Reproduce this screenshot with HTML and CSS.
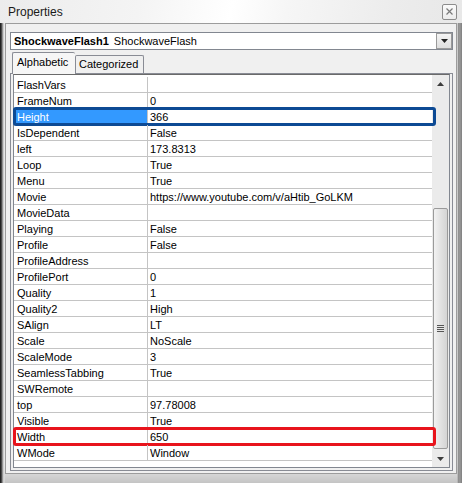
FILE: index.html
```html
<!DOCTYPE html>
<html lang="en">
<head>
    <meta charset="UTF-8">
    <title>Properties</title>
    <link rel="stylesheet" href="styles.css">
</head>
<body>
    <!-- Tool window title -->
    <div class="titlebar">
        <span class="title">Properties</span>
        <div class="close">
            <svg width="7" height="7" viewBox="0 0 7 7">
                <path d="M0.5 0.5 L6.5 6.5 M6.5 0.5 L0.5 6.5" stroke="#7a7a7a" stroke-width="1.2" fill="none"/>
            </svg>
        </div>
    </div>

    <div class="frame">
        <div class="panel">
            <!-- Object picker -->
            <div class="combo">
                <span><b>ShockwaveFlash1</b> ShockwaveFlash</span>
                <div class="drop">
                    <svg width="7" height="4" viewBox="0 0 7 4"><path d="M0 0 H7 L3.5 4 Z" fill="#222"/></svg>
                </div>
            </div>

            <div class="tabs">
                <div class="tab active">Alphabetic</div>
                <div class="tab">Categorized</div>
            </div>

            <div class="page">
                <div class="grid">
                    <div class="rows">
                        <div class="row"><div class="name">FlashVars</div><div class="val"></div></div>
                        <div class="row"><div class="name">FrameNum</div><div class="val">0</div></div>
                        <div class="row sel mark-blue"><div class="name">Height</div><div class="val">366</div></div>
                        <div class="row"><div class="name">IsDependent</div><div class="val">False</div></div>
                        <div class="row"><div class="name">left</div><div class="val">173.8313</div></div>
                        <div class="row"><div class="name">Loop</div><div class="val">True</div></div>
                        <div class="row"><div class="name">Menu</div><div class="val">True</div></div>
                        <div class="row"><div class="name">Movie</div><div class="val">https://www.youtube.com/v/aHtib_GoLKM</div></div>
                        <div class="row"><div class="name">MovieData</div><div class="val"></div></div>
                        <div class="row"><div class="name">Playing</div><div class="val">False</div></div>
                        <div class="row"><div class="name">Profile</div><div class="val">False</div></div>
                        <div class="row"><div class="name">ProfileAddress</div><div class="val"></div></div>
                        <div class="row"><div class="name">ProfilePort</div><div class="val">0</div></div>
                        <div class="row"><div class="name">Quality</div><div class="val">1</div></div>
                        <div class="row"><div class="name">Quality2</div><div class="val">High</div></div>
                        <div class="row"><div class="name">SAlign</div><div class="val">LT</div></div>
                        <div class="row"><div class="name">Scale</div><div class="val">NoScale</div></div>
                        <div class="row"><div class="name">ScaleMode</div><div class="val">3</div></div>
                        <div class="row"><div class="name">SeamlessTabbing</div><div class="val">True</div></div>
                        <div class="row"><div class="name">SWRemote</div><div class="val"></div></div>
                        <div class="row"><div class="name">top</div><div class="val">97.78008</div></div>
                        <div class="row"><div class="name">Visible</div><div class="val">True</div></div>
                        <div class="row mark-red"><div class="name">Width</div><div class="val">650</div></div>
                        <div class="row"><div class="name">WMode</div><div class="val">Window</div></div>
                    </div>

                    <!-- Vertical scrollbar -->
                    <div class="scroll">
                        <div class="arrow">
                            <svg width="7" height="4" viewBox="0 0 7 4"><path d="M3.5 0 L7 4 H0 Z" fill="#3c3c3c"/></svg>
                        </div>
                        <div class="thumb">
                            <div class="grip"></div>
                        </div>
                        <div class="arrow down">
                            <svg width="7" height="4" viewBox="0 0 7 4"><path d="M0 0 H7 L3.5 4 Z" fill="#3c3c3c"/></svg>
                        </div>
                    </div>
                </div>
            </div>
        </div>
    </div>
</body>
</html>
```
FILE: styles.css
```css
* {
    box-sizing: border-box;
}
body {
    margin: 0;
    width: 462px;
    height: 483px;
    overflow: hidden;
    font-family: "Liberation Sans", Arial, sans-serif;
    font-size: 11px;
    color: #000;
    background: #f0f0f0;
}
.titlebar {
    height: 23px;
    display: flex;
    align-items: center;
    justify-content: space-between;
    padding: 0 5px 0 8px;
    background: linear-gradient(100deg, #ececec 0%, #f4f4f4 30%, #ffffff 50%, #f6f6f6 62%, #ececec 85%, #e8e8e8 100%);
}
.title {
    font-size: 12px;
    color: #1a1a1a;
}
.close {
    width: 15px;
    height: 16px;
    border: 1px solid #8c8c8c;
    border-radius: 2px;
    background: linear-gradient(#fafafa, #ececec);
    display: flex;
    align-items: center;
    justify-content: center;
}
.close svg {
    display: block;
}
.frame {
    height: 460px;
    padding: 0 5px 9px 5px;
    background:
        linear-gradient(to right, #181818 0, #2e2e2e 1px, #6a6a6a 2px, #b8b8b8 3px, #e2e2e2 4px, rgba(240, 240, 240, 0) 5px),
        linear-gradient(to left, #9a9a9a 0, #707070 1px, #b4b4b4 2px, #7a7a7a 3px, #a6a6a6 4px, rgba(0, 0, 0, 0) 5px),
        linear-gradient(#f0f0f0 0, #ececec 440px, #c4c4c4 460px);
}
.panel {
    height: 451px;
    border: 1px solid #9c9c9c;
    background: #f0f0f0;
    padding: 8px 3px 0 4px;
}
.combo {
    height: 18px;
    border: 1px solid #828790;
    background: #fff;
    display: flex;
    align-items: center;
    padding-left: 3px;
    white-space: nowrap;
}
.combo b {
    margin-right: 2px;
}
.drop {
    margin-left: auto;
    width: 16px;
    height: 16px;
    border: 1px solid #9a9a9a;
    background: linear-gradient(#f4f4f4, #dedede);
    display: flex;
    align-items: center;
    justify-content: center;
}
.drop svg, .arrow svg {
    display: block;
}
.tabs {
    display: flex;
    align-items: flex-end;
    height: 21px;
    margin-top: 2px;
    padding-left: 2px;
    position: relative;
    z-index: 1;
}
.tab {
    height: 18px;
    line-height: 17px;
    border: 1px solid #898c95;
    border-bottom: none;
    background: #f0f0f0;
    border-radius: 2px 2px 0 0;
    padding-left: 3px;
    width: 69px;
    white-space: nowrap;
}
.tab.active {
    width: 63px;
    height: 22px;
    line-height: 19px;
    margin-bottom: -1px;
    padding-left: 4px;
    background: #f6f6f6;
    border-right: none;
}
.page {
    height: 398px;
    border: 1px solid #898c95;
    padding: 0 2px 2px 2px;
}
.grid {
    height: 394px;
    border: 1px solid #828790;
    border-top-color: #6a6a6a;
    background: #fff;
    display: flex;
}
.rows {
    flex: 1;
    padding-top: 2px;
}
.row {
    position: relative;
    display: flex;
    height: 16px;
    line-height: 15px;
    border-bottom: 1px solid #c4c4c4;
    white-space: nowrap;
}
.name {
    width: 134px;
    padding: 1px 0 0 3px;
    border-right: 1px solid #c4c4c4;
}
.val {
    flex: 1;
    padding: 1px 0 0 2px;
}
.row.sel .name {
    background: #3399ff;
    color: #fff;
}
/* annotation rings drawn over the rows */
.mark-blue::after, .mark-red::after {
    content: "";
    position: absolute;
    left: -1px;
    right: -4px;
    top: -2px;
    bottom: -2px;
    border: 3px solid #0d4a94;
    border-radius: 3px;
}
.mark-red::after {
    border-color: #e8141c;
}
.scroll {
    width: 17px;
    background: #ebebeb;
    display: flex;
    flex-direction: column;
}
.arrow {
    height: 17px;
    display: flex;
    align-items: center;
    justify-content: center;
}
.arrow.down {
    margin-top: auto;
}
.thumb {
    margin: 116px 1px 0 1px;
    height: 241px;
    border: 1px solid #9a9a9a;
    border-radius: 2px;
    background: linear-gradient(to right, #f2f2f2, #e2e2e2 50%, #d4d4d4);
    display: flex;
    align-items: center;
    justify-content: center;
}
.grip {
    width: 7px;
    height: 7px;
    background: repeating-linear-gradient(#555 0, #555 1px, #e6e6e6 1px, #e6e6e6 2px);
}
```
